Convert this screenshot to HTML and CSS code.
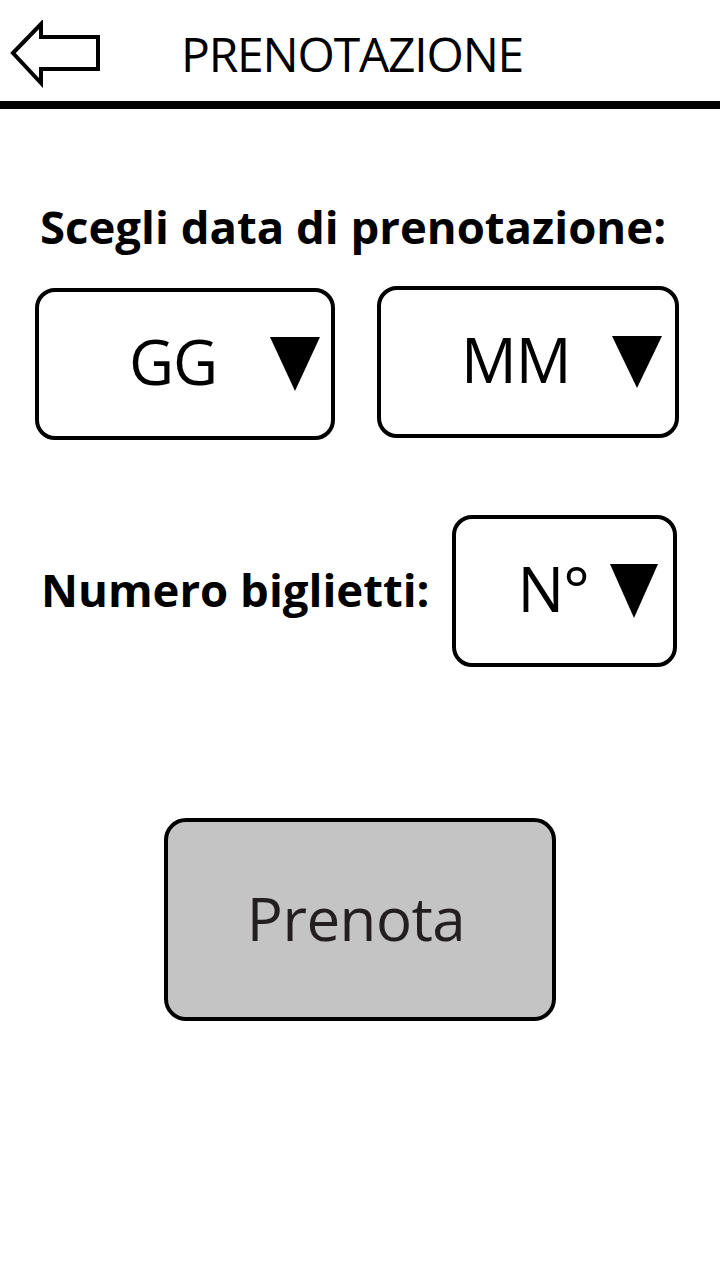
FILE: index.html
```html
<!DOCTYPE html>
<html lang="it">
<head>
<meta charset="utf-8">
<title>Prenotazione</title>
<link rel="stylesheet" href="styles.css">
</head>
<body>
<header class="topbar">
  <svg class="back" width="92" height="68" viewBox="0 0 92 68" aria-label="Indietro">
    <polygon points="3,33 31,4 31,17 88,17 88,49 31,49 31,63" fill="#fff" stroke="#000" stroke-width="4" stroke-linejoin="miter"/>
  </svg>
  <h1 class="title">PRENOTAZIONE</h1>
</header>
<div class="rule"></div>
<main class="content">
  <h2 class="label label-date">Scegli data di prenotazione:</h2>
  <div class="date-row">
    <div class="select select-gg">
      <span class="val">GG</span>
      <svg class="tri" width="50" height="54" viewBox="0 0 50 54"><polygon points="0,0 50,0 25,54" fill="#000"/></svg>
    </div>
    <div class="select select-mm">
      <span class="val">MM</span>
      <svg class="tri" width="50" height="52" viewBox="0 0 50 52"><polygon points="0,0 50,0 25,52" fill="#000"/></svg>
    </div>
  </div>
  <div class="ticket-row">
    <h2 class="label label-num">Numero biglietti:</h2>
    <div class="select select-n">
      <span class="val">N°</span>
      <svg class="tri" width="48" height="54" viewBox="0 0 48 54"><polygon points="0,0 48,0 24,54" fill="#000"/></svg>
    </div>
  </div>
  <div class="action">
    <button class="btn">Prenota</button>
  </div>
</main>
</body>
</html>
```

FILE: styles.css
```css
html, body {
  margin: 0;
  padding: 0;
  background: #fff;
}
body {
  width: 720px;
  height: 1280px;
  font-family: "Open Sans", "Noto Sans", sans-serif;
  color: #000;
}
.topbar {
  height: 101px;
  display: flex;
  align-items: center;
}
.back {
  margin-left: 10px;
  margin-top: 6px;
  display: block;
}
.title {
  margin: 0 0 0 79px;
  font-weight: 400;
  font-size: 48px;
  letter-spacing: -1.2px;
  line-height: 1;
  padding-top: 6px;
}
.rule {
  height: 8px;
  background: #000;
}
.content {
  padding: 0;
}
.label {
  margin: 0;
  font-weight: 700;
  line-height: 50px;
  font-size: 45.5px;
  letter-spacing: 0;
}
.label-date {
  margin: 92px 0 0 40px;
}
.date-row {
  display: flex;
  gap: 42px;
  margin: 35px 0 0 35px;
  align-items: flex-start;
}
.select {
  box-sizing: border-box;
  border: 4px solid #000;
  border-radius: 20px;
  height: 152px;
  display: flex;
  align-items: center;
  background: #fff;
}
.select .val {
  font-size: 62px;
  line-height: 1;
  font-weight: 400;
  letter-spacing: -1px;
  margin-bottom: 6px;
}
.select .tri {
  display: block;
  margin-left: auto;
}
.select-gg {
  width: 300px;
  margin-top: 2px;
  padding: 0 11px 0 90px;
}
.select-mm {
  width: 302px;
  padding: 0 13px 0 80px;
}
.ticket-row {
  display: flex;
  align-items: center;
  margin: 75px 0 0 0;
}
.label-num {
  margin-left: 41px;
  padding-bottom: 4px;
}
.select-n {
  width: 225px;
  margin-left: 22px;
  padding: 0 15px 0 62px;
}
.action {
  display: flex;
  justify-content: center;
  margin-top: 151px;
}
.btn {
  box-sizing: border-box;
  width: 392px;
  height: 203px;
  border: 4px solid #000;
  border-radius: 22px;
  background: #c4c4c4;
  font-family: "Open Sans", "Noto Sans", sans-serif;
  font-size: 60px;
  color: #231f20;
  letter-spacing: -0.5px;
  padding: 0 8px 4px 0;
}
```
